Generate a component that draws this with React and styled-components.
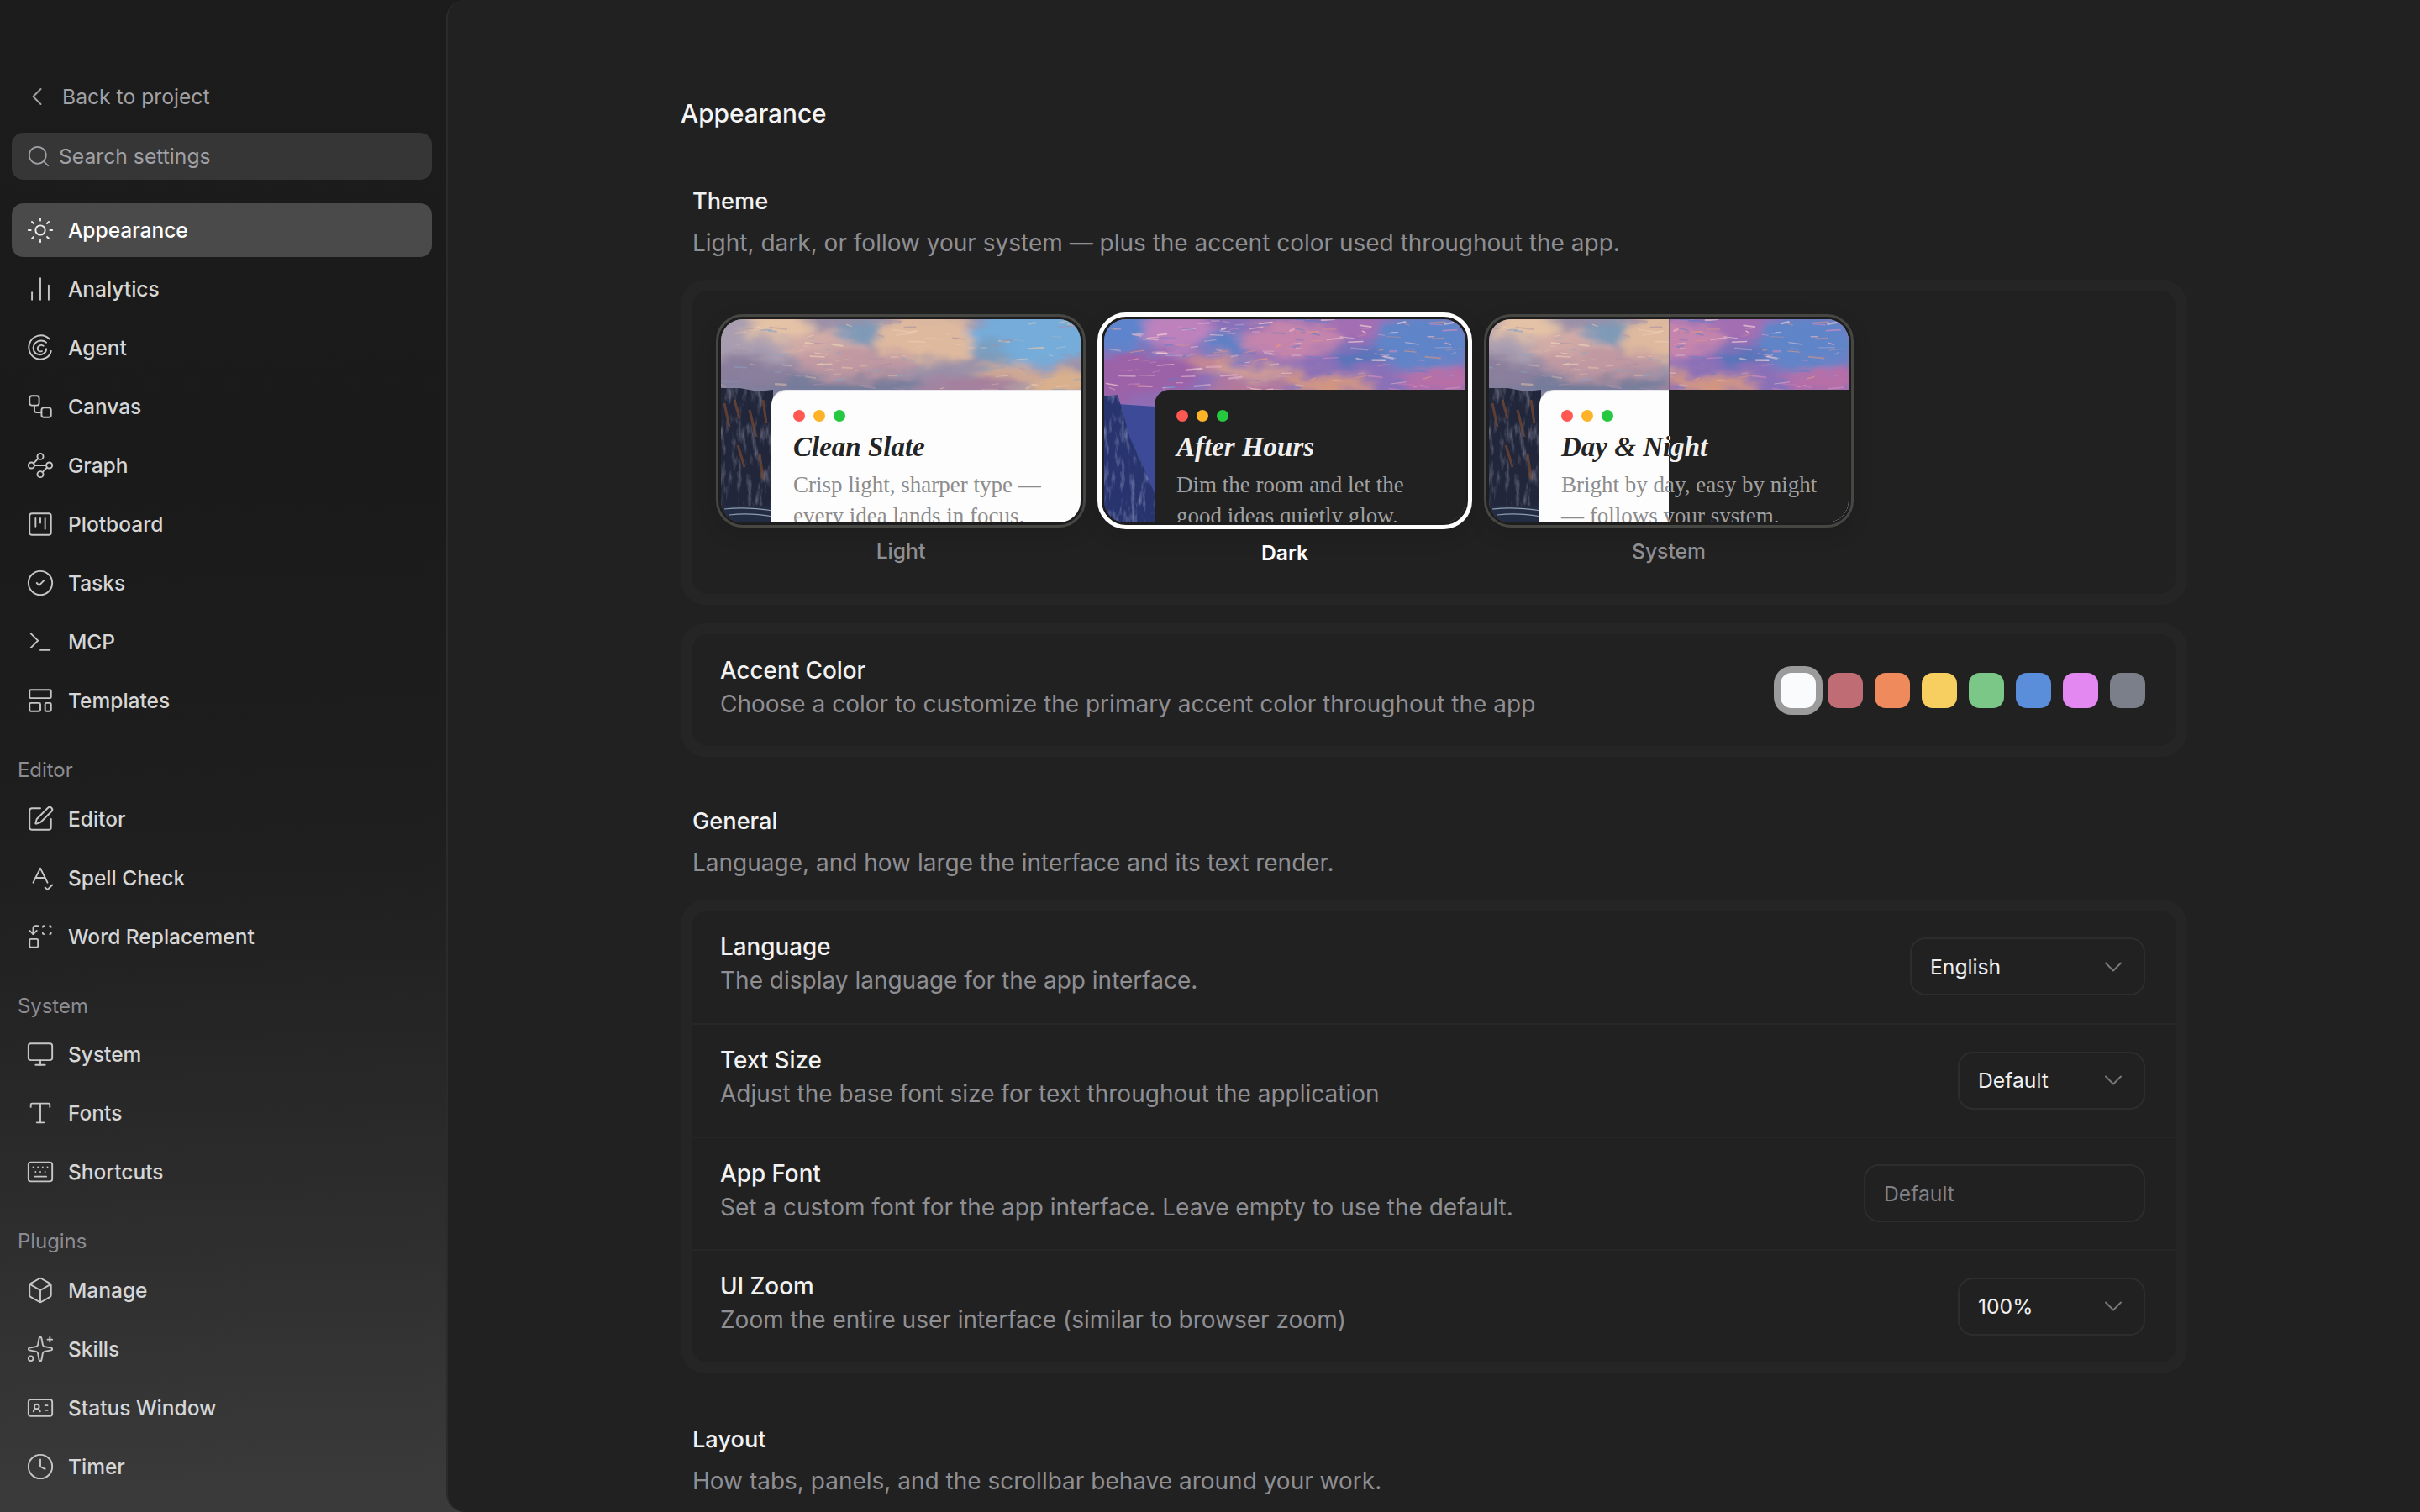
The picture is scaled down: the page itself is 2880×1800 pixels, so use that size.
import React from "react";
import styled, { createGlobalStyle, css } from "styled-components";
import {
  Box,
  ChartNoAxesColumn,
  ChevronDown,
  ChevronLeft,
  CircleCheck,
  Clock,
  IdCard,
  Keyboard,
  LayoutTemplate,
  Monitor,
  Replace,
  Search,
  Sparkles,
  SpellCheck,
  SquareKanban,
  SquarePen,
  Sun,
  Terminal,
  Type,
  Waypoints,
  Workflow,
} from "lucide-react";

const GlobalStyle = createGlobalStyle`
  html, body {
    margin: 0;
    height: 100%;
    background: #212121;
    overflow: hidden;
  }
  body {
    font-family: Inter, "Liberation Sans", sans-serif;
    color: #f2f2f2;
  }
  * {
    box-sizing: border-box;
  }
`;

const Shell = styled.div`
  display: flex;
  width: 2880px;
  height: 1800px;
  overflow: hidden;
  background: linear-gradient(178deg, #1c1c1c 0%, #1a1a1a 30%, #1e1e1e 52%, #222222 60%, #2e2e2e 78%, #3a3a3a 94%, #3c3c3c 100%);
`;

/* sidebar */
const Rail = styled.aside`
  width: 531px;
  flex-shrink: 0;
  padding: 95px 17px 0 14px;
`;

const BackLink = styled.div`
  display: flex;
  align-items: center;
  gap: 12px;
  height: 40px;
  padding-left: 12px;
  font-size: 24.7px;
  color: #a0a0a5;
  margin-bottom: 23px;
`;

const SearchBox = styled.div`
  display: flex;
  align-items: center;
  gap: 9px;
  height: 56px;
  padding-left: 17px;
  border-radius: 14px;
  background: #363636;
  font-size: 24.7px;
  color: #a0a0a5;
  margin-bottom: 28px;
`;

const NavItem = styled.div`
  display: flex;
  align-items: center;
  gap: 16px;
  height: 64px;
  padding-left: 17px;
  margin-bottom: 6px;
  border-radius: 14px;
  font-size: 24.5px;
  font-weight: 500;
  color: #d6d6d6;
  ${(p) =>
    p.$active &&
    css`
      background: #4a4a4a;
      color: #ffffff;
    `}
  svg {
    flex-shrink: 0;
    color: ${(p) => (p.$active ? "#ececec" : "#c6c6c6")};
  }
`;

const NavLabel = styled.div`
  height: 30px;
  line-height: 30px;
  margin: 36.2px 0 10.4px;
  padding-left: 7px;
  font-size: 23.9px;
  color: #8c8c92;
`;

/* main panel */
const Main = styled.main`
  flex: 1;
  min-width: 0;
  background: #212121;
  border-left: 2px solid #2b2b2b;
  border-top-left-radius: 22px;
  border-bottom-left-radius: 22px;
  padding: 115px 0 0 277px;
`;

const Content = styled.div`
  width: 1793px;
`;

const PageTitle = styled.h1`
  margin: 0 0 67px;
  font-size: 29.8px;
  line-height: 40px;
  font-weight: 500;
  color: #f5f5f5;
`;

const SectionHead = styled.div`
  padding-left: 14px;
  margin-bottom: 24px;
`;

const SectionTitle = styled.h2`
  margin: 0 0 11px;
  font-size: 27.2px;
  line-height: 36px;
  font-weight: 500;
  color: #f2f2f2;
`;

const SectionText = styled.p`
  margin: 0;
  font-size: 28px;
  line-height: 40px;
  color: #8e8e93;
`;

const CardRing = styled.section`
  padding: 13px;
  border-radius: 30px;
  background: #252525;
  margin-bottom: ${(p) => p.$after || 0}px;
`;

const CardInner = styled.div`
  border-radius: 20px;
  background: #212121;
`;

const ThemeRow = styled.div`
  display: flex;
  gap: 17px;
  height: 361px;
  padding: 28px 0 0 29px;
`;

const ThemeOption = styled.div`
  display: flex;
  flex-direction: column;
  align-items: center;
  width: 440px;
`;

const Tile = styled.div`
  flex-shrink: 0;
  width: ${(p) => (p.$selected ? 446 : 440)}px;
  height: ${(p) => (p.$selected ? 258 : 254)}px;
  margin-top: ${(p) => (p.$selected ? -2 : 0)}px;
  padding: 3px;
  border: ${(p) => (p.$selected ? "5px solid #ffffff" : "3px solid #464642")};
  border-radius: ${(p) => (p.$selected ? 34 : 32)}px;
  background: #1e1e1e;
  box-shadow: 0 8px 24px rgba(0, 0, 0, 0.12);
`;

const Frame = styled.div`
  position: relative;
  height: 100%;
  overflow: hidden;
  border-radius: 26px;
`;

const PaintingSvg = styled.svg`
  position: absolute;
  inset: 0;
  width: 100%;
  height: 100%;
  display: block;
`;

const Scene = styled.div`
  position: absolute;
  inset: 0;
  ${(p) => p.$clipRight && "clip-path: inset(0 0 0 50%);"}
`;

const SplitLine = styled.div`
  position: absolute;
  top: 0;
  left: 50%;
  width: 1px;
  height: 84px;
  background: rgba(90, 90, 100, 0.7);
`;

const Panel = styled.div`
  position: absolute;
  top: 84px;
  left: 60px;
  right: 0;
  bottom: 0;
  overflow: hidden;
  padding: 24px 0 0 26px;
  border-top-left-radius: 18px;
  background: ${(p) => (p.$dark ? "#212121" : "#fdfdfe")};
  ${(p) => !p.$dark && "border-top: 2px solid #e7e7ed;"}
`;

const Dots = styled.div`
  display: flex;
  gap: 10px;
  margin-top: ${(p) => (p.$dark ? 0 : -2)}px;
`;

const Dot = styled.span`
  width: 14px;
  height: 14px;
  border-radius: 50%;
  background: ${(p) => p.$color};
`;

const PanelTitle = styled.div`
  margin-top: 8px;
  font-family: "Liberation Serif", serif;
  font-style: italic;
  font-weight: 700;
  font-size: 33px;
  line-height: 44px;
  white-space: nowrap;
  color: ${(p) => (p.$dark ? "#f0f0f0" : "#242424")};
`;

const PanelText = styled.div`
  margin-top: 5px;
  font-family: "Liberation Serif", serif;
  font-size: 27px;
  line-height: 37px;
  white-space: nowrap;
  color: ${(p) => (p.$dark ? "#a0a0a0" : "#8c8c8c")};
`;

const ThemeName = styled.div`
  margin-top: 13px;
  font-size: 24.7px;
  line-height: 30px;
  font-weight: ${(p) => (p.$selected ? 600 : 500)};
  color: ${(p) => (p.$selected ? "#ffffff" : "#8e8e93")};
`;

const SettingRow = styled.div`
  display: flex;
  align-items: center;
  justify-content: space-between;
  height: ${(p) => p.$height || 134.5}px;
  padding: 0 37px 0 34px;
  & + & {
    border-top: 2px solid #272727;
  }
`;

const SettingText = styled.div`
  min-width: 0;
  padding-bottom: 8px;
`;

const SettingTitle = styled.div`
  font-size: 27.8px;
  line-height: 40px;
  font-weight: 500;
  color: #f2f2f2;
`;

const SettingDesc = styled.div`
  font-size: 28px;
  line-height: 40px;
  color: #8e8e93;
`;

const Swatches = styled.div`
  display: flex;
  gap: 14px;
`;

const Swatch = styled.span`
  width: 42px;
  height: 42px;
  border-radius: 13px;
  background: ${(p) => p.$color};
  ${(p) => p.$selected && "box-shadow: 0 0 0 8px #9b9b9b;"}
`;

const SelectBox = styled.div`
  display: flex;
  align-items: center;
  justify-content: space-between;
  width: ${(p) => p.$width}px;
  height: 69px;
  padding: 0 18px 0 22px;
  border: 2px solid #2d2d2d;
  border-radius: 18px;
  font-size: 24.7px;
  color: #f0f0f0;
  svg {
    color: #7a7a7a;
  }
`;

const TextField = styled.div`
  display: flex;
  align-items: center;
  width: 335px;
  height: 69px;
  padding-left: 22px;
  border: 2px solid #2d2d2d;
  border-radius: 18px;
  font-size: 24.7px;
  color: #808085;
`;

const lightBlobs = [
  [210, 40, 260, 70, "#9a90a8"],
  [30, 24, 60, 40, "#a99eb0"],
  [70, 6, 40, 20, "#e4c2a6"],
  [128, 34, 50, 20, "#d2aca6"],
  [172, 14, 36, 12, "#7c9ab8"],
  [250, 22, 66, 30, "#dfb99e"],
  [160, 54, 70, 18, "#bf98a2"],
  [372, 20, 78, 36, "#74acda"],
  [322, 40, 26, 12, "#7c9cbc"],
  [404, 76, 40, 16, "#d9b08e"],
  [340, 68, 40, 16, "#cfa894"],
  [120, 80, 130, 12, "#727a9a"],
  [290, 82, 60, 12, "#a5809e"],
  [30, 64, 60, 18, "#8a7f9c"],
];

const darkBlobs = [
  [214, 40, 280, 70, "#8a70b8"],
  [24, 16, 50, 26, "#5d84cc"],
  [90, 14, 44, 22, "#bd82bc"],
  [150, 30, 34, 18, "#6080c6"],
  [220, 24, 60, 20, "#c484ac"],
  [310, 8, 44, 14, "#a46eb2"],
  [380, 30, 60, 34, "#6084c8"],
  [300, 44, 30, 12, "#5474ba"],
  [100, 52, 54, 9, "#cc8a8c"],
  [265, 78, 60, 9, "#d89a78"],
  [180, 62, 50, 8, "#d6a090"],
  [396, 72, 46, 14, "#b96ea6"],
  [40, 66, 70, 30, "#9c62a8"],
  [170, 82, 50, 8, "#ba7a94"],
];

// short dabs on top of the soft sky, same dabs every render
function makeDabs(seed, colors, count) {
  let s = seed;
  const rnd = () => {
    s = (s * 16807) % 2147483647;
    return s / 2147483647;
  };
  const dabs = [];
  for (let i = 0; i < count; i++) {
    const x = rnd() * 428;
    const y = rnd() * 84;
    const len = 4 + rnd() * 16;
    const tilt = (rnd() - 0.5) * 5;
    dabs.push({
      d: `M${x.toFixed(1)} ${y.toFixed(1)}l${len.toFixed(1)} ${tilt.toFixed(1)}`,
      color: colors[Math.floor(rnd() * colors.length)],
      width: 0.8 + rnd() * 1.6,
      opacity: 0.25 + rnd() * 0.45,
    });
  }
  return dabs;
}

const lightDabs = makeDabs(4711, ["#f0d4b8", "#e6c4a8", "#a48ea4", "#8aa4c4"], 110);
const darkDabs = makeDabs(1984, ["#f0b8c8", "#e89a7c", "#5f7ec8", "#d88cc0", "#f6d4d8"], 190);

// oil painted backdrop of the theme cards, sky above a cliff
function Painting({ id, dark, shift = 0 }) {
  const blobs = dark ? darkBlobs : lightBlobs;
  const dabs = dark ? darkDabs : lightDabs;
  return (
    <PaintingSvg viewBox="0 0 428 242" preserveAspectRatio="none" aria-hidden="true">
      <defs>
        <filter id={`${id}-brush`} x="-10%" y="-10%" width="120%" height="120%">
          <feGaussianBlur stdDeviation="6" result="soft" />
          <feTurbulence type="fractalNoise" baseFrequency="0.025 0.06" numOctaves="4" seed={dark ? 7 : 3} result="n" />
          <feDisplacementMap in="soft" in2="n" scale="26" xChannelSelector="R" yChannelSelector="G" />
          <feGaussianBlur stdDeviation="1.4" />
        </filter>
        <filter id={`${id}-rock`} x="0" y="0" width="100%" height="100%">
          <feTurbulence type="fractalNoise" baseFrequency="0.16 0.04" numOctaves="4" seed="5" />
          <feColorMatrix
            values={
              dark
                ? "0 0 0 0 0.4  0 0 0 0 0.46  0 0 0 0 0.7  0 0 0 2 -1"
                : "0 0 0 0 0.32  0 0 0 0 0.3  0 0 0 0 0.4  0 0 0 2 -1"
            }
          />
        </filter>
        <clipPath id={`${id}-cliff`}>
          {dark ? (
            <path d="M0 92 L16 90 L22 110 L30 140 L46 175 L60 208 L62 242 L0 242 Z" />
          ) : (
            <path d="M0 82 L22 82 L44 86 L62 84 L62 242 L0 242 Z" />
          )}
        </clipPath>
      </defs>
      <rect width="428" height="242" fill={dark ? "#8a70b8" : "#8f8ba6"} />
      <g filter={`url(#${id}-brush)`} transform={`translate(${shift} 0)`}>
        {blobs.map(([cx, cy, rx, ry, fill], i) => (
          <ellipse key={i} cx={cx} cy={cy} rx={rx} ry={ry} fill={fill} />
        ))}
      </g>
      <g transform={`translate(${shift} 0)`} fill="none" strokeLinecap="round">
        {dabs.map((dab, i) => (
          <path key={i} d={dab.d} stroke={dab.color} strokeWidth={dab.width} opacity={dab.opacity} />
        ))}
      </g>
      {dark && <path d="M0 100 L60 104 L70 242 L0 242 Z" fill="#3c4a98" />}
      <g clipPath={`url(#${id}-cliff)`}>
        <rect y="80" width="70" height="162" fill={dark ? "#28346e" : "#21263a"} />
        <rect y="80" width="70" height="162" filter={`url(#${id}-rock)`} opacity="0.75" />
        {!dark && (
          <>
            <path d="M4 100 L10 128 M16 96 L22 118 M34 108 L42 140 M50 96 L54 124 M20 150 L28 176 M46 160 L50 190" stroke="#7a4a30" strokeWidth="3" opacity="0.7" fill="none" />
            <rect y="222" width="70" height="20" fill="#222c42" />
            <path d="M4 226 Q30 223 62 228 M10 233 Q34 230 62 235" stroke="#aebccb" strokeWidth="1.2" opacity="0.8" fill="none" />
          </>
        )}
      </g>
    </PaintingSvg>
  );
}

function SceneLayer({ id, dark, title, lines, shift, clipRight }) {
  return (
    <Scene $clipRight={clipRight}>
      <Painting id={id} dark={dark} shift={shift} />
      <Panel $dark={dark}>
        <Dots $dark={dark}>
          <Dot $color="#ff5752" />
          <Dot $color="#ffb327" />
          <Dot $color="#26c840" />
        </Dots>
        <PanelTitle $dark={dark}>{title}</PanelTitle>
        <PanelText $dark={dark}>
          {lines[0]}
          <br />
          {lines[1]}
        </PanelText>
      </Panel>
    </Scene>
  );
}

function AgentIcon({ size = 24, strokeWidth = 2 }) {
  return (
    <svg width={size} height={size} viewBox="0 0 24 24" fill="none" stroke="currentColor" strokeWidth={strokeWidth} strokeLinecap="round">
      <path d="M19.5 4.6A10 10 0 0 0 2.6 9.5 10 10 0 0 0 9 21.2c5 1.6 11-1 12-6.4" />
      <path d="M17 7.6a6.8 6.8 0 0 0-10.4 2.2c-1.6 3.3.2 7 3.6 7.8 3.4.8 6.8-1.3 6.8-4.8" />
      <path d="M14.6 10.4c-2-1.3-4.6-.2-4.9 1.9-.2 2 1.8 3.3 3.6 2.6" />
    </svg>
  );
}

const navMain = [
  [Sun, "Appearance", true],
  [ChartNoAxesColumn, "Analytics"],
  [AgentIcon, "Agent"],
  [Workflow, "Canvas"],
  [Waypoints, "Graph"],
  [SquareKanban, "Plotboard"],
  [CircleCheck, "Tasks"],
  [Terminal, "MCP"],
  [LayoutTemplate, "Templates"],
];

const navGroups = [
  {
    label: "Editor",
    items: [
      [SquarePen, "Editor"],
      [SpellCheck, "Spell Check"],
      [Replace, "Word Replacement"],
    ],
  },
  {
    label: "System",
    items: [
      [Monitor, "System"],
      [Type, "Fonts"],
      [Keyboard, "Shortcuts"],
    ],
  },
  {
    label: "Plugins",
    items: [
      [Box, "Manage"],
      [Sparkles, "Skills"],
      [IdCard, "Status Window"],
      [Clock, "Timer"],
    ],
  },
];

const accents = ["#fafbfd", "#c06c74", "#ee8a5c", "#f6cf60", "#7ac788", "#5a8edb", "#e388f0", "#7b7f89"];

function Nav({ icon: Icon, label, active }) {
  return (
    <NavItem $active={active}>
      <Icon size={34} strokeWidth={1.35} />
      {label}
    </NavItem>
  );
}

function Select({ value, width }) {
  return (
    <SelectBox $width={width}>
      {value}
      <ChevronDown size={36} strokeWidth={1.25} />
    </SelectBox>
  );
}

function Setting({ title, desc, children, height }) {
  return (
    <SettingRow $height={height}>
      <SettingText>
        <SettingTitle>{title}</SettingTitle>
        <SettingDesc>{desc}</SettingDesc>
      </SettingText>
      {children}
    </SettingRow>
  );
}

export default function App() {
  return (
    <>
      <GlobalStyle />
      <Shell>
        <Rail>
          <BackLink>
            <ChevronLeft size={36} strokeWidth={1.3} />
            Back to project
          </BackLink>
          <SearchBox>
            <Search size={30} strokeWidth={1.4} />
            Search settings
          </SearchBox>
          {navMain.map(([icon, label, active]) => (
            <Nav key={label} icon={icon} label={label} active={active} />
          ))}
          {navGroups.map((group) => (
            <React.Fragment key={group.label}>
              <NavLabel>{group.label}</NavLabel>
              {group.items.map(([icon, label]) => (
                <Nav key={label} icon={icon} label={label} />
              ))}
            </React.Fragment>
          ))}
        </Rail>
        <Main>
          <Content>
            <PageTitle>Appearance</PageTitle>

            <SectionHead>
              <SectionTitle>Theme</SectionTitle>
              <SectionText>Light, dark, or follow your system — plus the accent color used throughout the app.</SectionText>
            </SectionHead>
            <CardRing $after={22}>
              <CardInner>
                <ThemeRow>
                  <ThemeOption>
                    <Tile>
                      <Frame>
                        <SceneLayer id="light" title="Clean Slate" lines={["Crisp light, sharper type —", "every idea lands in focus."]} />
                      </Frame>
                    </Tile>
                    <ThemeName>Light</ThemeName>
                  </ThemeOption>
                  <ThemeOption>
                    <Tile $selected>
                      <Frame>
                        <SceneLayer id="dark" dark title="After Hours" lines={["Dim the room and let the", "good ideas quietly glow."]} />
                      </Frame>
                    </Tile>
                    <ThemeName $selected>Dark</ThemeName>
                  </ThemeOption>
                  <ThemeOption>
                    <Tile>
                      <Frame>
                        <SceneLayer id="sys-day" title="Day &amp; Night" shift={-26} lines={["Bright by day, easy by night", "— follows your system."]} />
                        <SceneLayer id="sys-night" dark clipRight title="Day &amp; Night" lines={["Bright by day, easy by night", "— follows your system."]} />
                        <SplitLine />
                      </Frame>
                    </Tile>
                    <ThemeName>System</ThemeName>
                  </ThemeOption>
                </ThemeRow>
              </CardInner>
            </CardRing>

            <CardRing $after={58.5}>
              <CardInner>
                <Setting title="Accent Color" desc="Choose a color to customize the primary accent color throughout the app" height={133}>
                  <Swatches>
                    {accents.map((color, i) => (
                      <Swatch key={color} $color={color} $selected={i === 0} />
                    ))}
                  </Swatches>
                </Setting>
              </CardInner>
            </CardRing>

            <SectionHead>
              <SectionTitle>General</SectionTitle>
              <SectionText>Language, and how large the interface and its text render.</SectionText>
            </SectionHead>
            <CardRing $after={61.5}>
              <CardInner>
                <Setting title="Language" desc="The display language for the app interface.">
                  <Select value="English" width={280} />
                </Setting>
                <Setting title="Text Size" desc="Adjust the base font size for text throughout the application">
                  <Select value="Default" width={223} />
                </Setting>
                <Setting title="App Font" desc="Set a custom font for the app interface. Leave empty to use the default.">
                  <TextField>Default</TextField>
                </Setting>
                <Setting title="UI Zoom" desc="Zoom the entire user interface (similar to browser zoom)">
                  <Select value="100%" width={223} />
                </Setting>
              </CardInner>
            </CardRing>

            <SectionHead>
              <SectionTitle>Layout</SectionTitle>
              <SectionText>How tabs, panels, and the scrollbar behave around your work.</SectionText>
            </SectionHead>
          </Content>
        </Main>
      </Shell>
    </>
  );
}
